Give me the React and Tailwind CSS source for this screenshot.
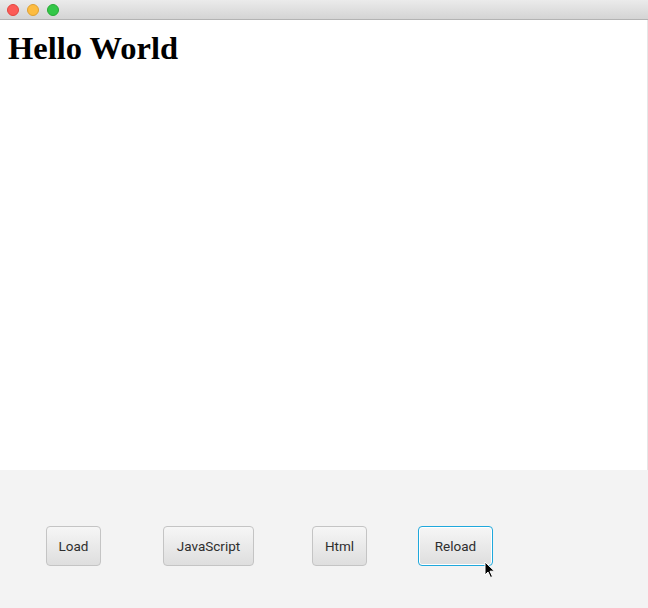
import React from "react";

function Btn({ label, className = "", focused = false }) {
  return (
    <button
      className={
        "h-[40px] rounded-[4px] bg-gradient-to-b from-[#f6f6f6] to-[#dedede] pt-[1px] text-[13.5px] text-[#2e2e2e] font-['Roboto',sans-serif] " +
        (focused
          ? "border border-[#1fa8dc] shadow-[inset_0_0_0_1px_#ffffff] "
          : "border border-[#c4c4c4] ") +
        className
      }
    >
      {label}
    </button>
  );
}

export default function App() {
  return (
    <div className="h-[608px] w-[648px] flex flex-col bg-white overflow-hidden">
      {/* title bar */}
      <div className="h-[20px] flex items-center gap-[8px] pl-[7px] bg-gradient-to-b from-[#ebebeb] to-[#d4d4d4] border-b border-[#b3b3b3]">
        <span className="w-[12px] h-[12px] rounded-full bg-[#fc5b57] border border-[#e2463f]" />
        <span className="w-[12px] h-[12px] rounded-full bg-[#fdbc40] border border-[#dea032]" />
        <span className="w-[12px] h-[12px] rounded-full bg-[#33c748] border border-[#27aa35]" />
      </div>

      {/* web view */}
      <div className="flex-1 bg-white border-r border-[#e6e6e6]">
        <h1 className="m-0 pl-[8px] pt-[9px] text-[32.5px] leading-[38px] font-bold text-black font-['Liberation_Serif',serif]">
          Hello World
        </h1>
      </div>

      {/* controls */}
      <div className="h-[138px] bg-[#f3f3f3] pt-[56px] pl-[46px] flex items-start">
        <Btn label="Load" className="w-[55px]" />
        <Btn label="JavaScript" className="w-[91px] ml-[62px]" />
        <Btn label="Html" className="w-[55px] ml-[58px]" />
        <div className="relative ml-[51px]">
          <Btn label="Reload" className="w-[75px]" focused />
          <svg
            className="absolute left-[66px] top-[35px]"
            width="12"
            height="18"
            viewBox="0 0 12 18"
          >
            <path
              d="M1 1 L1 14 L4 11 L6.5 16.5 L8.5 15.6 L6 10.2 L10.5 10.2 Z"
              fill="#000"
              stroke="#fff"
              strokeWidth="1"
              strokeLinejoin="round"
            />
          </svg>
        </div>
      </div>
    </div>
  );
}
